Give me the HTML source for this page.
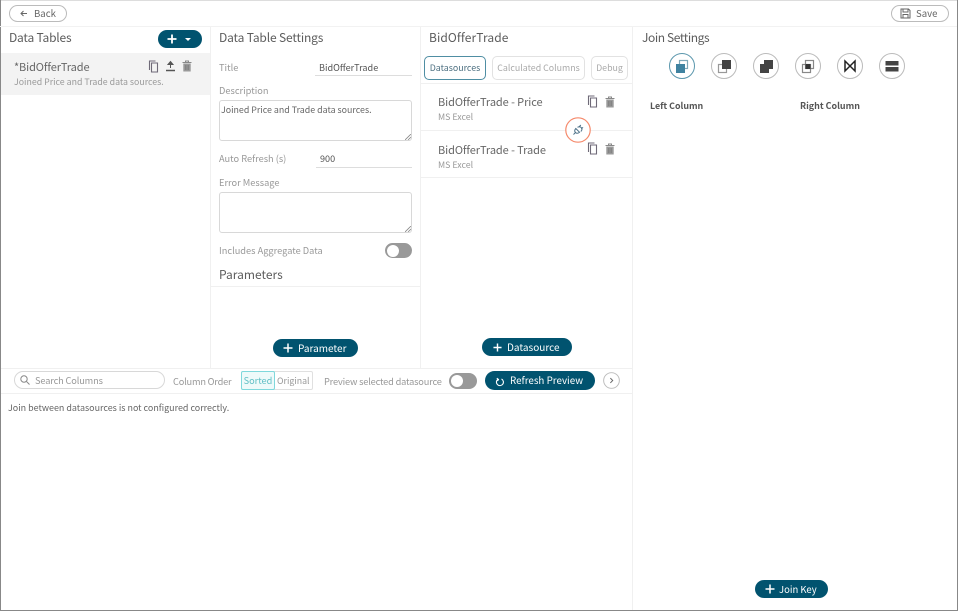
<!DOCTYPE html>
<html><head><meta charset="utf-8">
<style>
html,body{margin:0;padding:0;background:#fff}
body{width:958px;height:611px;position:relative;overflow:hidden;font-family:"Noto Sans CJK SC","Liberation Sans",sans-serif;color:#666}
.a{position:absolute;white-space:nowrap}
.l{position:absolute;background:#f0f0f0}
.h{font-size:12px;color:#5c5c5c;line-height:16px}
.f{font-size:9.25px;color:#999;line-height:12px}
.btn{position:absolute;background:#01536f;border-radius:10px;height:18px}
.bt{position:absolute;color:#fff;font-size:10px;line-height:18px;white-space:nowrap}
.ta{position:absolute;border:1px solid #d8d8d8;border-radius:3px;box-sizing:border-box;background:#fff}
.inp{position:absolute;border-bottom:1px solid #ddd;font-size:9.1px;color:#555;line-height:14px;box-sizing:border-box}
.tog{position:absolute;width:27px;height:15px;border-radius:8px;background:#999}
.tog i{position:absolute;left:2px;top:1.5px;width:12px;height:12px;border-radius:50%;background:#fff}
.tab{position:absolute;border:1px solid #e2e2e2;border-radius:5px;box-sizing:border-box;height:24px;line-height:22px;text-align:center;font-size:8.85px;color:#aaa}
.jc{position:absolute;top:53px;width:26px;height:26px;border:1px solid #bbb;border-radius:50%;box-sizing:border-box;background:#fff}
.jc svg{position:absolute;left:0;top:0}
svg.i{position:absolute}
</style></head><body>
<svg width="0" height="0" style="position:absolute"><defs>
<symbol id="cp" viewBox="0 0 11 13"><path d="M7.500 1H1.500V10M3.500 3H9.500V12H3.500Z" fill="none" stroke="#6f6a78" stroke-width="1.100"/></symbol>
<symbol id="tr" viewBox="0 0 10 12"><path d="M.5 2.500H9.500M3.500 2.500V1H6.500V2.500" fill="none" stroke="#888"/><path d="M1.300 3.500H8.700V11.500H1.300Z" fill="#999"/><path d="M3.500 5V10M5 5V10M6.500 5V10" stroke="#777" stroke-width=".6"/></symbol>
</defs></svg>
<div class="l" style="left:0;top:0;width:958px;height:1px;background:#ddd"></div>
<div class="l" style="left:0;top:0;width:1px;height:611px;background:#888"></div>
<div class="l" style="left:957px;top:0;width:1px;height:611px;background:#888"></div>
<div class="l" style="left:0;top:610px;width:958px;height:1px;background:#888"></div>
<div class="l" style="left:0;top:26px;width:957px;height:1px;background:#f2f2f2"></div>
<div class="l" style="left:210px;top:27px;width:1px;height:341px"></div>
<div class="l" style="left:420px;top:27px;width:1px;height:341px"></div>
<div class="l" style="left:632px;top:27px;width:1px;height:583px"></div>
<div class="l" style="left:1px;top:368px;width:631px;height:1px"></div>
<div class="l" style="left:1px;top:393px;width:631px;height:1px"></div>

<div class="a" style="left:9px;top:5px;width:58px;height:17px;border:1px solid #bbb;border-radius:10px;box-sizing:border-box"></div>
<svg class="i" style="left:19px;top:9px" width="10" height="9" viewBox="0 0 10 9"><path d="M8 4.500H2M4.500 2L2 4.500 4.500 7" fill="none" stroke="#666" stroke-width="1"/></svg>
<div class="a" style="left:34px;top:7px;font-size:9.6px;line-height:13px;color:#666">Back</div>
<div class="a" style="left:891px;top:5px;width:58px;height:17px;border:1px solid #bbb;border-radius:10px;box-sizing:border-box"></div>
<svg class="i" style="left:900px;top:8px" width="11" height="11" viewBox="0 0 11 11"><path d="M1 1H8.500L10 2.500V10H1ZM3 1V4H8V1M3 10V6.500H8V10" fill="none" stroke="#666" stroke-width="1"/></svg>
<div class="a" style="left:916px;top:7px;font-size:9.6px;line-height:13px;color:#666">Save</div>

<div class="a h" style="left:9px;top:30px;letter-spacing:-.2px">Data Tables</div>
<div class="btn" style="left:158px;top:30px;width:44px"></div>
<svg class="i" style="left:166px;top:33px" width="28" height="12" viewBox="0 0 28 12"><path d="M6 1.500V10.500M1.500 6H10.500" stroke="#fff" stroke-width="1.800"/><path d="M19 5H25L22 8Z" fill="#fff"/></svg>
<div class="a" style="left:1px;top:53px;width:209px;height:42px;background:#f3f3f3"></div>
<div class="a" style="left:14px;top:60px;font-size:11px;line-height:14px;color:#666;letter-spacing:-.1px">*BidOfferTrade</div>
<div class="a f" style="left:14px;top:76px;font-size:8.8px">Joined Price and Trade data sources.</div>
<svg class="i" style="left:148px;top:60px" width="11" height="13"><use href="#cp"/></svg>
<svg class="i" style="left:164.500px;top:60px" width="11" height="12" viewBox="0 0 11 12"><path d="M5.500 8V2M3 4.500L5.500 1.500 8 4.500Z" fill="#555" stroke="#555"/><path d="M1 10.500H10" stroke="#555" stroke-width="1.500"/></svg>
<svg class="i" style="left:182px;top:60px" width="10" height="12"><use href="#tr"/></svg>

<div class="a h" style="left:219px;top:30px;letter-spacing:-.15px">Data Table Settings</div>
<div class="a f" style="left:219px;top:61px">Title</div>
<div class="inp" style="left:315px;top:60px;width:97px;height:16px;padding-left:4px">BidOfferTrade</div>
<div class="a f" style="left:219px;top:84px">Description</div>
<div class="ta" style="left:219px;top:100px;width:193px;height:41px"></div>
<div class="a" style="left:221px;top:103.500px;font-size:8.85px;line-height:12px;color:#666">Joined Price and Trade data sources.</div>
<svg class="i" style="left:405px;top:134px" width="6" height="6" viewBox="0 0 6 6"><path d="M0 6L6 0M3 6L6 3" stroke="#888" stroke-width=".8"/></svg>
<div class="a f" style="left:219px;top:151.500px">Auto Refresh (s)</div>
<div class="inp" style="left:316px;top:152px;width:96px;height:16px;padding-left:4px;line-height:12px">900</div>
<div class="a f" style="left:219px;top:176px">Error Message</div>
<div class="ta" style="left:219px;top:192px;width:193px;height:41px"></div>
<svg class="i" style="left:405px;top:226px" width="6" height="6" viewBox="0 0 6 6"><path d="M0 6L6 0M3 6L6 3" stroke="#888" stroke-width=".8"/></svg>
<div class="a f" style="left:219px;top:244px">Includes Aggregate Data</div>
<div class="tog" style="left:385px;top:243px"><i></i></div>
<div class="a h" style="left:219px;top:267px">Parameters</div>
<div class="l" style="left:211px;top:286px;width:209px;height:1px"></div>
<div class="btn" style="left:273px;top:339px;width:85px"></div><div class="bt" style="left:298px;top:338.500px">Parameter</div>
<svg class="i" style="left:283px;top:343px" width="10" height="10" viewBox="0 0 10 10"><path d="M5 .5V9.500M.5 5H9.500" stroke="#fff" stroke-width="1.500"/></svg>

<div class="a h" style="left:429px;top:30px;letter-spacing:.1px">BidOfferTrade</div>
<div class="tab" style="left:424px;top:56px;width:62px;border-color:#4f8ea3;color:#4c6f80">Datasources</div>
<div class="tab" style="left:492px;top:56px;width:93px">Calculated Columns</div>
<div class="tab" style="left:591px;top:56px;width:37px">Debug</div>
<div class="l" style="left:421px;top:83px;width:211px;height:1px"></div>
<div class="a" style="left:438px;top:95px;font-size:11px;line-height:14px;color:#666;letter-spacing:-.08px">BidOfferTrade - Price</div>
<div class="a f" style="left:438px;top:111px;font-size:8.8px">MS Excel</div>
<div class="l" style="left:421px;top:130px;width:211px;height:1px"></div>
<div class="a" style="left:438px;top:143px;font-size:11px;line-height:14px;color:#666;letter-spacing:-.08px">BidOfferTrade - Trade</div>
<div class="a f" style="left:438px;top:159px;font-size:8.8px">MS Excel</div>
<div class="l" style="left:421px;top:177px;width:211px;height:1px"></div>
<svg class="i" style="left:587px;top:95px" width="11" height="13"><use href="#cp"/></svg>
<svg class="i" style="left:604.500px;top:96px" width="10" height="12"><use href="#tr"/></svg>
<svg class="i" style="left:587px;top:142px" width="11" height="13"><use href="#cp"/></svg>
<svg class="i" style="left:604.500px;top:143px" width="10" height="12"><use href="#tr"/></svg>
<svg class="i" style="left:565px;top:117px" width="26" height="26" viewBox="0 0 26 26"><circle cx="13" cy="13" r="12.200" fill="#fff" stroke="#f58a6c" stroke-width="1.200"/><path d="M8.500 17.500L10.300 15.700M10.800 11.500L14.500 15.200C13 16.500 11.500 16.500 10.500 15.500C9.500 14.500 9.500 13 10.800 11.500ZM12.500 10.300C14 9.500 15.500 9.500 16.500 10.800C17.300 12 16.800 13.500 15.800 14.500M14 10L15.800 8M16.300 12L18 10.300" fill="none" stroke="#4a6f86" stroke-width="1"/></svg>
<div class="btn" style="left:482px;top:338px;width:90px"></div><div class="bt" style="left:507px;top:337.500px">Datasource</div>
<svg class="i" style="left:493px;top:343px" width="9" height="9" viewBox="0 0 10 10"><path d="M5 .5V9.500M.5 5H9.500" stroke="#fff" stroke-width="1.600"/></svg>

<div class="a h" style="left:642px;top:30px;letter-spacing:-.4px">Join Settings</div>
<div class="jc" style="left:669px;border-color:#5b97ad"><svg width="24" height="24" viewBox="0 0 24 24"><rect x="9.500" y="6.500" width="8" height="8" fill="#fff" stroke="#7fa8b9" stroke-width="1.200"/><rect x="6" y="10" width="9" height="9" fill="#3f82a0"/></svg></div>
<div class="jc" style="left:711px"><svg width="24" height="24" viewBox="0 0 24 24"><rect x="6.500" y="10.500" width="8" height="8" fill="none" stroke="#999" stroke-width="1.200"/><rect x="10" y="6" width="9" height="9" fill="#444"/></svg></div>
<div class="jc" style="left:753px"><svg width="24" height="24" viewBox="0 0 24 24"><rect x="6" y="10" width="9" height="9" fill="#444"/><rect x="10" y="6" width="9" height="9" fill="#444"/></svg></div>
<div class="jc" style="left:795px"><svg width="24" height="24" viewBox="0 0 24 24"><rect x="6.500" y="10.500" width="8" height="8" fill="none" stroke="#888" stroke-width="1.200"/><rect x="9.500" y="6.500" width="8" height="8" fill="none" stroke="#888" stroke-width="1.200"/><rect x="9.500" y="10" width="5" height="5" fill="#333"/></svg></div>
<div class="jc" style="left:837px"><svg width="24" height="24" viewBox="0 0 24 24"><path d="M7 7V17L17 7V17Z" fill="none" stroke="#222" stroke-width="1.500"/></svg></div>
<div class="jc" style="left:879px"><svg width="24" height="24" viewBox="0 0 24 24"><rect x="5.500" y="7" width="13" height="4.500" fill="#444"/><rect x="5.500" y="13" width="13" height="4.500" fill="#444"/></svg></div>
<div class="a" style="left:650px;top:99px;font-size:8.9px;font-weight:bold;line-height:13px;color:#555">Left Column</div>
<div class="a" style="left:800px;top:99px;font-size:8.95px;font-weight:bold;line-height:13px;color:#555">Right Column</div>
<div class="btn" style="left:755px;top:580px;width:73px"></div><div class="bt" style="left:779px;top:579.500px;font-size:9.5px">Join Key</div>
<svg class="i" style="left:765px;top:584px" width="10" height="10" viewBox="0 0 10 10"><path d="M5 .5V9.500M.5 5H9.500" stroke="#fff" stroke-width="1.500"/></svg>

<div class="a" style="left:14px;top:371px;width:151px;height:18px;border:1px solid #d8d8d8;border-radius:9px;box-sizing:border-box"></div>
<svg class="i" style="left:20px;top:375px" width="10" height="10" viewBox="0 0 10 10"><circle cx="4" cy="4" r="3.200" fill="none" stroke="#888"/><path d="M6.500 6.500L9.500 9.500" stroke="#888"/></svg>
<div class="a f" style="left:35px;top:374px;letter-spacing:-.15px">Search Columns</div>
<div class="a f" style="left:173px;top:374.500px;letter-spacing:-.2px">Column Order</div>
<div class="a" style="left:241px;top:371px;width:72px;height:19px;border:1px solid #e0e0e0;border-radius:2px;box-sizing:border-box"></div>
<div class="a" style="left:241px;top:371px;width:34px;height:19px;border:1.500px solid #7fd8dc;border-radius:2px;box-sizing:border-box;background:#eefafa;font-size:9.2px;line-height:16px;text-align:center;color:#62c0c6">Sorted</div>
<div class="a" style="left:277px;top:375px;font-size:8.8px;line-height:11px;color:#999">Original</div>
<div class="a f" style="left:324px;top:374.500px;letter-spacing:-.18px">Preview selected datasource</div>
<div class="tog" style="left:449px;top:372.500px;width:28px;height:16px"><i style="top:2px"></i></div>
<div class="btn" style="left:484.500px;top:371px;width:110px;height:19px"></div><div class="bt" style="left:510px;top:371px;font-size:9.8px">Refresh Preview</div>
<svg class="i" style="left:494.500px;top:376.500px" width="10" height="10" viewBox="0 0 10 10"><path d="M3 2.200A3.500 3.500 0 1 0 6.500 2M1.800 1.200L3.500 2.500 2.500 4" fill="none" stroke="#fff" stroke-width="1.100"/></svg>
<svg class="i" style="left:603px;top:372px" width="17" height="17" viewBox="0 0 18 18"><circle cx="9" cy="9" r="8.300" fill="none" stroke="#bbb"/><path d="M7.800 6.500L10.300 9 7.800 11.500" fill="none" stroke="#666"/></svg>
<div class="a" style="left:8px;top:402px;font-size:8.95px;line-height:12px;color:#666">Join between datasources is not configured correctly.</div>
</body></html>
